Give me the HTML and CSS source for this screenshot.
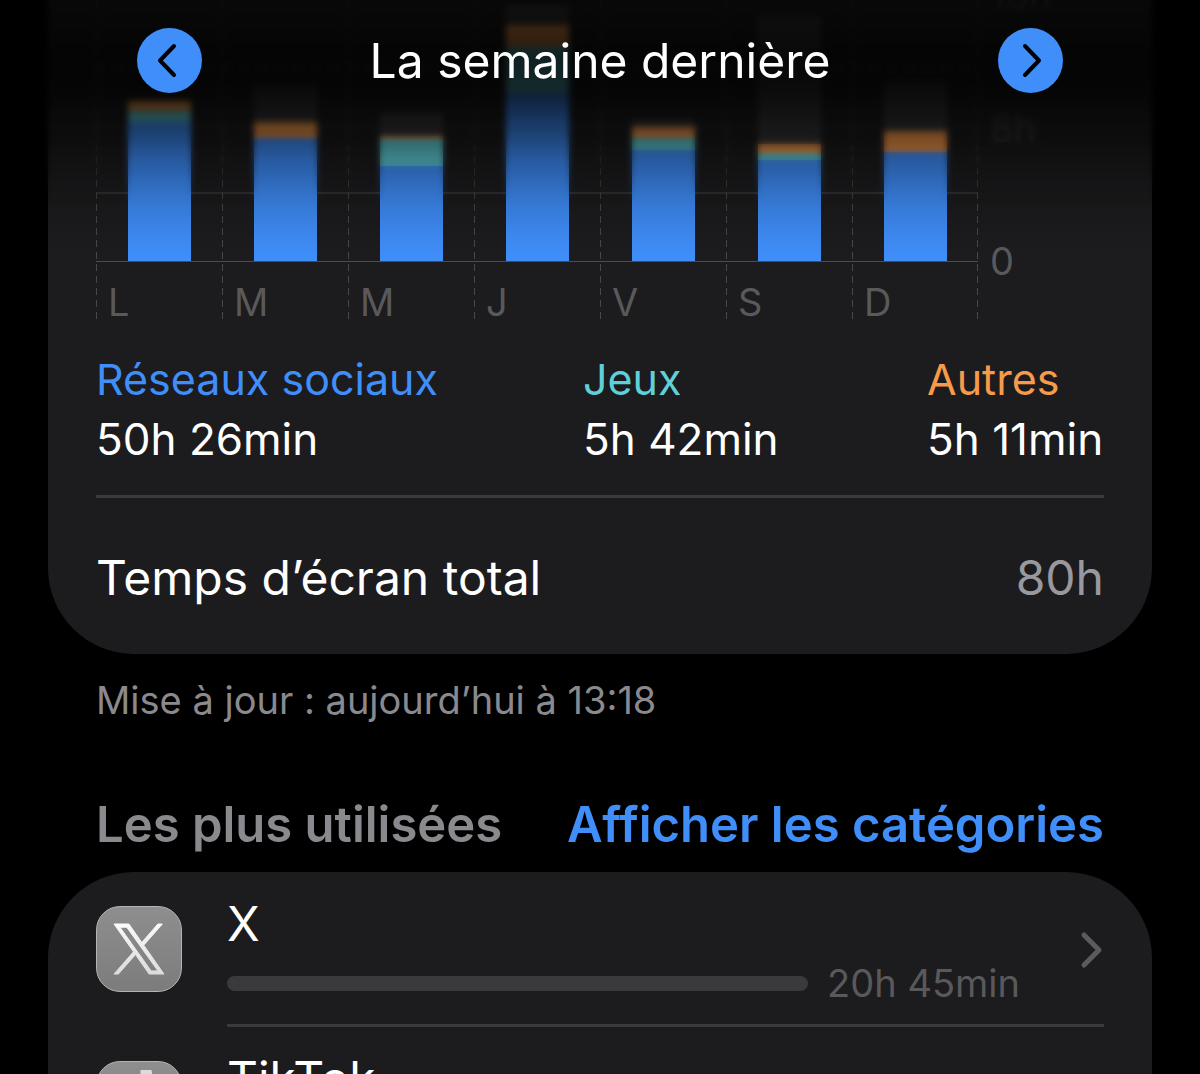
FILE: index.html
```html
<!DOCTYPE html>
<html lang="fr">
<head>
<meta charset="utf-8">
<meta name="viewport" content="width=device-width, initial-scale=1">
<title>Temps d’écran</title>
<link rel="stylesheet" href="styles.css">
</head>
<body>
<header class="topbar">
  <button class="nav-button" type="button" aria-label="Semaine précédente">
    <svg viewBox="0 0 65 65" aria-hidden="true"><path d="M37 18 23 32.500 37 47"/></svg>
  </button>
  <h1 class="title">La semaine dernière</h1>
  <button class="nav-button" type="button" aria-label="Semaine suivante">
    <svg viewBox="0 0 65 65" aria-hidden="true"><path d="M27 18 41 32.500 27 47"/></svg>
  </button>
</header>

<main class="page">
  <section class="card summary">
    <div class="chart">
      <div class="plot">
        <div class="day">
          <div class="bar"><i class="other" style="height:10px"></i><i class="games" style="height:11px"></i><i class="social" style="height:139px"></i></div>
          <span class="day-name">L</span>
        </div>
        <div class="day">
          <div class="bar"><i class="rest" style="height:37px"></i><i class="other" style="height:16px"></i><i class="social" style="height:123px"></i></div>
          <span class="day-name">M</span>
        </div>
        <div class="day">
          <div class="bar"><i class="rest" style="height:24px"></i><i class="other" style="height:3px"></i><i class="games" style="height:27px"></i><i class="social" style="height:95px"></i></div>
          <span class="day-name">M</span>
        </div>
        <div class="day">
          <div class="bar"><i class="rest" style="height:20px"></i><i class="other" style="height:22px"></i><i class="games" style="height:45px"></i><i class="social" style="height:169px"></i></div>
          <span class="day-name">J</span>
        </div>
        <div class="day">
          <div class="bar"><i class="rest" style="height:8px"></i><i class="other" style="height:11px"></i><i class="games" style="height:12px"></i><i class="social" style="height:111px"></i></div>
          <span class="day-name">V</span>
        </div>
        <div class="day">
          <div class="bar"><i class="rest" style="height:128px"></i><i class="other" style="height:9px"></i><i class="games" style="height:7px"></i><i class="social" style="height:101px"></i></div>
          <span class="day-name">S</span>
        </div>
        <div class="day">
          <div class="bar"><i class="rest" style="height:50px"></i><i class="other" style="height:21px"></i><i class="social" style="height:109px"></i></div>
          <span class="day-name">D</span>
        </div>
      </div>
      <div class="scale">
        <span>0</span>
        <span class="faint">8h</span>
        <span class="faint">16h</span>
      </div>
    </div>

    <dl class="legend">
      <div><dt class="label-social">Réseaux sociaux</dt><dd>50h 26min</dd></div>
      <div><dt class="label-games">Jeux</dt><dd>5h 42min</dd></div>
      <div><dt class="label-other">Autres</dt><dd>5h 11min</dd></div>
    </dl>

    <div class="total">
      <span>Temps d’écran total</span>
      <span class="total-value">80h</span>
    </div>
  </section>

  <p class="updated">Mise à jour : aujourd’hui à 13:18</p>

  <div class="section-head">
    <h2>Les plus utilisées</h2>
    <a href="#categories">Afficher les catégories</a>
  </div>

  <ul class="card apps" id="categories">
    <li class="app">
      <span class="app-icon">
        <svg class="logo-x" viewBox="0 0 300 301" aria-hidden="true">
          <defs><linearGradient id="silver" x1="0" y1="0" x2="0" y2="1"><stop offset="0" stop-color="#fafafa"/><stop offset="1" stop-color="#dcdcdc"/></linearGradient></defs>
          <path fill="url(#silver)" stroke="url(#silver)" stroke-width="6" d="M178.570 127.150 290.270 0h-26.460l-97.030 110.380L89.340 0H0l117.130 166.930L0 300.250h26.460l102.400-116.590 81.800 116.590H300zM36.010 19.540H76.660l187.130 262.130h-40.660z"/>
        </svg>
      </span>
      <div class="app-body">
        <div class="app-main">
          <span class="app-name">X</span>
          <div class="usage"><span class="usage-bar"></span><span class="usage-time">20h 45min</span></div>
        </div>
        <svg class="chevron" viewBox="0 0 24 38" aria-hidden="true"><path d="M4 4 19 19 4 34"/></svg>
      </div>
    </li>
    <li class="app">
      <span class="app-icon">
        <svg class="logo-tiktok" viewBox="0 0 24 24" aria-hidden="true"><path fill="#dcdcdc" d="M12.525.02c1.310-.02 2.610-.01 3.910-.02.08 1.530.63 3.090 1.750 4.170 1.120 1.110 2.700 1.620 4.240 1.790v4.030c-1.440-.05-2.890-.35-4.200-.97-.57-.26-1.100-.59-1.620-.93-.01 2.920.01 5.840-.02 8.750-.08 1.400-.54 2.790-1.350 3.940-1.310 1.920-3.580 3.170-5.910 3.210-1.430.08-2.860-.31-4.080-1.030-2.020-1.190-3.440-3.370-3.650-5.710-.02-.5-.03-1-.01-1.490.18-1.900 1.120-3.720 2.580-4.960 1.660-1.440 3.980-2.130 6.150-1.720.02 1.480-.04 2.960-.04 4.440-.99-.32-2.150-.23-3.020.37-.63.41-1.110 1.040-1.360 1.750-.21.51-.15 1.070-.14 1.610.24 1.640 1.820 3.020 3.500 2.870 1.120-.01 2.190-.66 2.770-1.610.19-.33.4-.67.41-1.060.1-1.790.06-3.570.07-5.360.01-4.030-.01-8.050.02-12.070z"/></svg>
      </span>
      <div class="app-body">
        <div class="app-main">
          <span class="app-name">TikTok</span>
          <div class="usage"><span class="usage-bar"></span></div>
        </div>
        <svg class="chevron" viewBox="0 0 24 38" aria-hidden="true"><path d="M4 4 19 19 4 34"/></svg>
      </div>
    </li>
  </ul>
</main>
</body>
</html>
```
FILE: styles.css
```css
:root {
  --blue: #3f8efa;
  --teal: #5fd0d8;
  --orange: #f79a4a;
  --card: #1c1c1e;
  --line: #3a3a3d;
  --muted: #59595c;
}

* {
  box-sizing: border-box;
}

html {
  scrollbar-width: none;
}

body {
  margin: 0;
  background: #000;
  color: #fff;
  font-family: Inter, "Liberation Sans", sans-serif;
}

h1,
h2,
p,
dl,
dd,
ul {
  margin: 0;
  padding: 0;
}

/* Floating header that fades and blurs the chart below it */
.topbar {
  position: absolute;
  z-index: 1;
  top: 0;
  left: 0;
  right: 0;
  height: 260px;
  padding: 28px 137px 0;
  display: flex;
  justify-content: space-between;
  align-items: flex-start;
  background: linear-gradient(
    rgba(0, 0, 0, 0.7) 0,
    rgba(0, 0, 0, 0.84) 60px,
    rgba(0, 0, 0, 0.8) 90px,
    rgba(0, 0, 0, 0.56) 130px,
    rgba(0, 0, 0, 0.36) 160px,
    rgba(0, 0, 0, 0.17) 200px,
    rgba(0, 0, 0, 0.04) 240px,
    rgba(0, 0, 0, 0) 260px
  );
}

.topbar::before {
  content: "";
  position: absolute;
  z-index: -1;
  inset: 0 0 56px;
  backdrop-filter: blur(3px);
  -webkit-mask-image: linear-gradient(#000 130px, transparent);
  mask-image: linear-gradient(#000 130px, transparent);
}

.nav-button {
  width: 65px;
  height: 65px;
  padding: 0;
  border: 0;
  border-radius: 50%;
  background: var(--blue);
}

.nav-button svg {
  display: block;
  width: 100%;
  fill: none;
  stroke: #000;
  stroke-width: 4;
  stroke-linecap: round;
  stroke-linejoin: round;
}

.title {
  font-size: 48px;
  line-height: 65px;
  font-weight: 400;
}

.page {
  padding: 0 48px;
}

.card {
  padding: 0 48px;
  background: var(--card);
}

.summary {
  overflow: hidden;
  border-radius: 0 0 86px 86px;
}

/* Weekly chart */
.chart {
  display: grid;
  grid-template-columns: 7fr 1fr;
  height: 321px;
}

.plot {
  display: grid;
  grid-template-columns: repeat(7, 1fr);
  height: 321px;
  background:
    repeating-linear-gradient(#48484b 0 7px, transparent 7px 12px) right 0 / 1px 100% no-repeat,
    linear-gradient(#4c4c4f, #4c4c4f) 0 261px / 100% 1px no-repeat,
    linear-gradient(#333336, #333336) 0 192px / 100% 2px no-repeat,
    linear-gradient(#28282b, #28282b) 0 127px / 100% 2px no-repeat,
    repeating-linear-gradient(90deg, #1c4a2a 0 8px, transparent 8px 18px) 0 66px / 100% 4px no-repeat;
}

.day {
  height: 321px;
  background: repeating-linear-gradient(#48484b 0 7px, transparent 7px 12px) 0 0 / 1px 100% no-repeat;
}

.bar {
  height: 261px;
  width: 50%;
  margin: 0 auto;
  display: flex;
  flex-direction: column;
  justify-content: flex-end;
}

.social {
  background: var(--blue);
}

.games {
  background: var(--teal);
}

.other {
  background: var(--orange);
}

.rest {
  background: #37373a;
}

.day-name,
.scale {
  color: var(--muted);
  font-size: 38px;
  line-height: 46px;
}

.day-name {
  display: block;
  padding: 18px 0 0 12px;
}

.scale {
  display: flex;
  flex-direction: column-reverse;
  gap: 87px;
  height: 321px;
  padding: 0 0 37px 12px;
}

.faint {
  opacity: 0.5;
}

.legend {
  display: grid;
  grid-template-columns: 487fr 344fr 177fr;
  padding: 28px 0 26px;
  border-bottom: 3px solid var(--line);
  font-size: 43px;
  line-height: 60px;
  white-space: nowrap;
}

.legend dd {
  font-size: 44px;
}

.label-social {
  color: var(--blue);
}

.label-games {
  color: var(--teal);
}

.label-other {
  color: var(--orange);
}

.total {
  display: flex;
  justify-content: space-between;
  padding: 50px 0 46px;
  font-size: 48px;
  line-height: 60px;
}

.total-value {
  color: #98989e;
}

.updated {
  padding: 23px 48px 0;
  color: #8a8a8e;
  font-size: 38px;
  line-height: 46px;
}

.section-head {
  display: flex;
  justify-content: space-between;
  padding: 72px 48px 17px;
  font-size: 49px;
  line-height: 60px;
  font-weight: 600;
}

.section-head h2 {
  color: #8a8a8e;
  font-size: 49px;
  font-weight: 600;
}

.section-head a {
  color: var(--blue);
  text-decoration: none;
}

/* App list */
.apps {
  border-radius: 86px;
  list-style: none;
}

.app {
  display: flex;
  gap: 45px;
}

.app-icon {
  display: flex;
  align-items: center;
  justify-content: center;
  width: 86px;
  height: 86px;
  margin-top: 34px;
  border: 1px solid #b4b4b4;
  border-radius: 24px;
  background: linear-gradient(#8e8e8e, #7c7c7c);
}

.logo-x {
  width: 50px;
  overflow: visible;
}

.logo-tiktok {
  width: 68px;
}

.app-body {
  flex: 1;
  display: flex;
  align-items: center;
  gap: 60px;
  padding-top: 4px;
  border-bottom: 3px solid var(--line);
}

.app:last-child .app-body {
  border-bottom-color: transparent;
}

.app-main {
  flex: 1;
  display: flex;
  flex-direction: column;
  gap: 6px;
  padding: 18px 0;
}

.app-name {
  font-size: 48px;
  line-height: 60px;
}

.usage {
  display: flex;
  align-items: center;
  gap: 19px;
  height: 46px;
}

.usage-bar {
  flex: 1;
  height: 15px;
  border-radius: 8px;
  background: #3a3a3c;
}

.usage-time {
  color: var(--muted);
  font-size: 38px;
  line-height: 46px;
}

.chevron {
  width: 24px;
  height: 38px;
  fill: none;
  stroke: #5b5b5e;
  stroke-width: 5;
  stroke-linecap: round;
  stroke-linejoin: round;
}
```
